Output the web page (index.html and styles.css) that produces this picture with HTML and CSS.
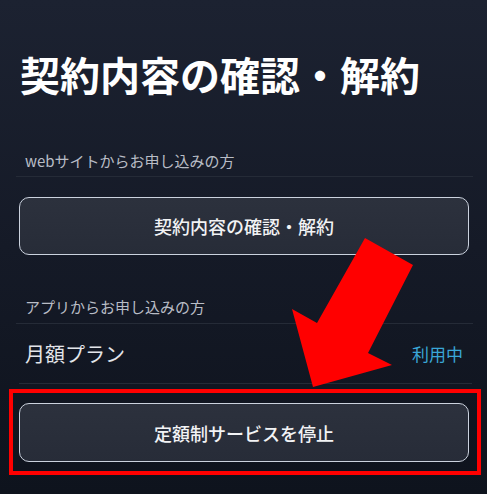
FILE: index.html
```html
<!DOCTYPE html>
<html lang="ja">
<head>
<meta charset="utf-8">
<link rel="stylesheet" href="styles.css">
</head>
<body>
<div class="page">
  <h1 class="title">契約内容の確認・解約</h1>
  <div class="section section-web">
    <div class="label">webサイトからお申し込みの方</div>
    <button class="btn btn-web">契約内容の確認・解約</button>
  </div>
  <div class="section section-app">
    <div class="label">アプリからお申し込みの方</div>
    <div class="plan-row">
      <span class="plan-name">月額プラン</span>
      <span class="plan-status">利用中</span>
    </div>
    <button class="btn btn-stop">定額制サービスを停止</button>
  </div>
</div>
<div class="highlight"></div>
<svg class="arrow" width="487" height="494" viewBox="0 0 487 494">
  <polygon points="365,238 413,265 368,353 392,365 313,387 292,309 317,323" fill="#ff0000"/>
</svg>
</body>
</html>
```
FILE: styles.css
```css
html, body {
  margin: 0;
  padding: 0;
}
body {
  width: 487px;
  height: 494px;
  overflow: hidden;
  position: relative;
  background: linear-gradient(180deg, #1c2231 0%, #151a27 50%, #0e131d 100%);
  font-family: "Noto Sans CJK JP", "Noto Sans", sans-serif;
  color: #e6e8ec;
}
.page {
  padding: 50px 18px 0 19px;
  display: flex;
  flex-direction: column;
}
.title {
  margin: 0;
  padding-left: 1px;
  font-size: 40px;
  line-height: 48px;
  font-weight: 700;
  color: #ffffff;
  letter-spacing: 0;
}
.section {
  display: flex;
  flex-direction: column;
}
.section-web {
  margin-top: 53px;
}
.section-app {
  margin-top: 42px;
}
.label {
  font-size: 15px;
  line-height: 20px;
  color: #b9bdc6;
  padding: 0 0 5px 9px;
  margin: 0 -4px 0 -3px;
  border-bottom: 1px solid #252b37;
}
.section-app .label {
  padding-bottom: 6px;
}
.btn {
  box-sizing: border-box;
  width: 100%;
  height: 58px;
  border: 1.5px solid #cbd2de;
  border-radius: 10px;
  background: linear-gradient(180deg, #2c313d 0%, #272c38 100%);
  color: #f2f3f5;
  font-family: inherit;
  font-size: 18px;
  font-weight: 500;
  padding: 0;
  display: flex;
  align-items: center;
  justify-content: center;
}
.btn-web {
  margin-top: 20px;
}
.btn-stop {
  margin-top: 19px;
  height: 59px;
}
.plan-row {
  display: flex;
  justify-content: space-between;
  align-items: center;
  height: 59px;
  padding: 0 9px 0 6px;
  margin: 0 -3px 0 0;
  border-bottom: 1px solid #252b37;
}
.plan-name {
  font-size: 20px;
  color: #e3e5ea;
}
.plan-status {
  font-size: 17px;
  color: #3aa6d8;
}
.highlight {
  position: absolute;
  left: 9px;
  top: 389px;
  width: 472px;
  height: 86px;
  box-sizing: border-box;
  border: 4px solid #ff0000;
}
.arrow {
  position: absolute;
  left: 0;
  top: 0;
}
```
